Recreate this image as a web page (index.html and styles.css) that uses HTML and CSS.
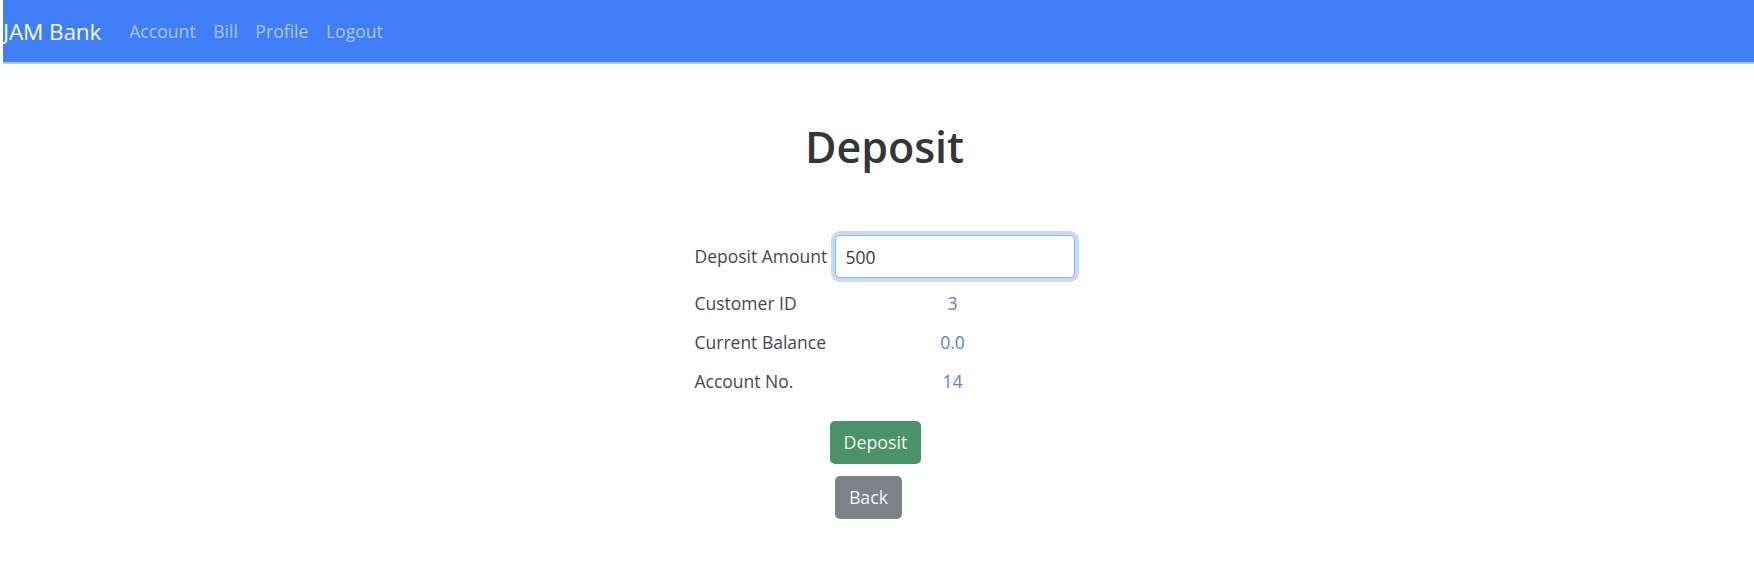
FILE: index.html
```html
<!DOCTYPE html>
<html lang="en">
<head>
<meta charset="utf-8">
<title>JAM Bank - Deposit</title>
<link rel="stylesheet" href="styles.css">
</head>
<body>
<nav class="navbar">
  <a class="brand" href="#">JAM Bank</a>
  <ul class="nav-links">
    <li><a href="#">Account</a></li>
    <li><a href="#">Bill</a></li>
    <li><a href="#">Profile</a></li>
    <li><a href="#">Logout</a></li>
  </ul>
</nav>
<main class="page">
  <h1 class="title">Deposit</h1>
  <div class="form-wrap">
    <form class="deposit-form">
      <label class="field-label" for="amount">Deposit Amount</label>
      <div class="field-value"><input id="amount" class="amount-input" type="text" value="500" autofocus></div>
      <span class="field-label">Customer ID</span>
      <span class="field-value info">3</span>
      <span class="field-label">Current Balance</span>
      <span class="field-value info">0.0</span>
      <span class="field-label">Account No.</span>
      <span class="field-value info">14</span>
    </form>
  </div>
  <div class="actions">
    <button class="btn btn-success" type="button">Deposit</button>
    <button class="btn btn-secondary btn-back" type="button">Back</button>
  </div>
</main>
</body>
</html>
```
FILE: styles.css
```css
* { box-sizing: border-box; }
html, body { margin: 0; padding: 0; background: #ffffff; }
body {
  font-family: "Open Sans", "Noto Sans", "Liberation Sans", sans-serif;
  font-size: 17.5px;
  line-height: 27px;
  color: #3d3f44;
}
.navbar {
  margin-left: 3px;
  height: 64px;
  background: #3f7ef7;
  border-bottom: 2px solid #a9c6fa;
  display: flex;
  align-items: center;
  padding-top: 1px;
}
.brand {
  color: #f4f8ff;
  font-size: 22.7px;
  text-decoration: none;
  margin-right: 28px;
  letter-spacing: -0.2px;
}
.nav-links {
  list-style: none;
  display: flex;
  gap: 17.5px;
  margin: 0;
  padding: 0;
}
.nav-links a {
  color: #aac6f8;
  text-decoration: none;
  font-size: 17.6px;
}
.page { display: flex; flex-direction: column; align-items: center; }
.title {
  margin: 56px 0 0 0;
  padding-left: 15px;
  font-size: 43px;
  line-height: 53px;
  font-weight: 600;
  color: #34363b;
}
.form-wrap {
  margin-top: 62px;
  padding-left: 13px;
}
.deposit-form {
  display: grid;
  grid-template-columns: 140px 238px;
  row-gap: 12px;
  align-items: center;
}
.field-label { color: #46484d; white-space: nowrap; }
.field-value { padding-right: 2px; text-align: center; }
.info { color: #5a80d8; }
.amount-input {
  display: block;
  width: 240px;
  height: 43px;
  margin-right: -2px;
  padding: 0 10px;
  font: inherit;
  color: #35373b;
  border: 1px solid #8db6f7;
  border-radius: 5px;
  box-shadow: 0 0 0 4px #c8dafa;
  outline: none;
}
.actions {
  margin-top: 26px;
  display: flex;
  flex-direction: column;
  align-items: center;
  gap: 12px;
}
.btn {
  font: inherit;
  font-size: 17.8px;
  height: 43px;
  padding: 0 14px;
  border: none;
  border-radius: 5px;
  color: #f1f6f3;
}
.btn-success { background: #4b916a; margin-left: -3px; }
.btn-secondary { background: #7c818a; }
.btn-back { margin-right: 17px; }
```
